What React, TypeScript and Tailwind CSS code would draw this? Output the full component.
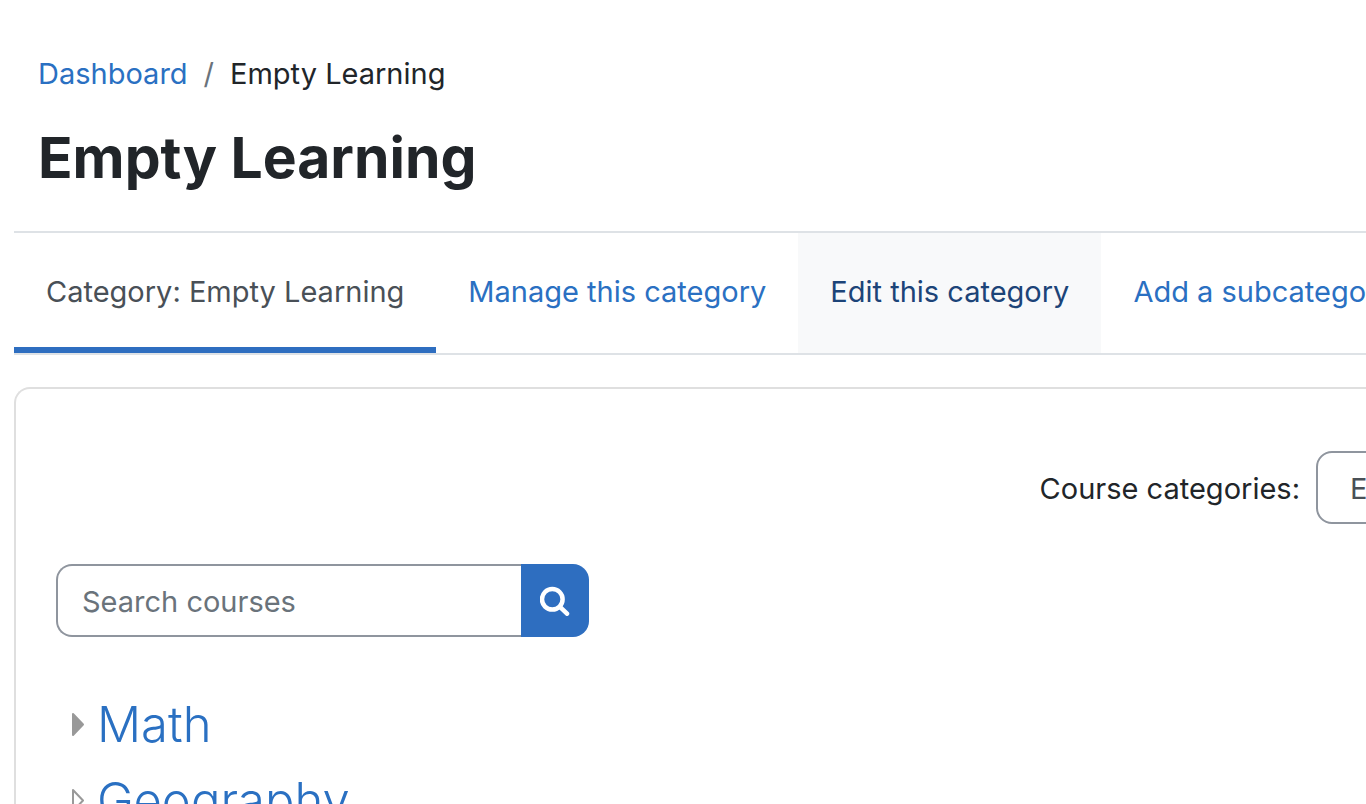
const tabs = [
  { label: "Category: Empty Learning", state: "active" },
  { label: "Manage this category", state: "normal" },
  { label: "Edit this category", state: "hover" },
  { label: "Add a subcategory", state: "normal" },
];

const tabStyles: Record<string, string> = {
  active: "border-[#2e6ec0] text-[#495057]",
  normal: "border-transparent text-[#2a70c2]",
  hover: "border-[#f8f9fa] bg-[#f8f9fa] text-[#1c4478]",
};

const categories = [
  { name: "Math", filled: true },
  { name: "Geography", filled: false },
];

function SearchIcon() {
  return (
    <svg width="30" height="30" viewBox="0 0 30 30" fill="none" stroke="currentColor" strokeWidth="4.5" strokeLinecap="round">
      <circle cx="12.3" cy="13.3" r="10.3" />
      <path d="M20.2 21.2l6.8 6.5" />
    </svg>
  );
}

export default function App() {
  return (
    <div className="h-screen overflow-hidden bg-white pl-[14px] font-['Inter',sans-serif] text-[29px] leading-[46px] text-[#212529]">
      {/* Header */}
      <header className="px-6 pt-[51px] pb-9">
        <nav aria-label="Breadcrumb" className="flex gap-4">
          <a href="#" className="text-[#2a70c2]">Dashboard</a>
          <span className="text-[#6a737b]">/</span>
          <span>Empty Learning</span>
        </nav>
        <h1 className="mt-6 text-[57px] leading-[74px] font-bold">Empty Learning</h1>
      </header>

      {/* Tabs */}
      <nav aria-label="Category" className="flex border-y-2 border-[#dee2e6] whitespace-nowrap">
        {tabs.map((tab) => (
          <a key={tab.label} href="#" className={`flex h-[120px] shrink-0 items-center border-b-6 px-8 pt-1 ${tabStyles[tab.state]}`}>
            {tab.label}
          </a>
        ))}
      </nav>

      <main className="mt-8 h-screen rounded-tl-2xl border-t-2 border-l-2 border-[#dfdfdf] px-10 pt-[62px]">
        <div className="-mr-[200px] flex items-center justify-end gap-4 whitespace-nowrap">
          <label htmlFor="category" className="pt-0.5">Course categories:</label>
          <select id="category" className="h-[73px] w-[210px] shrink-0 appearance-none rounded-2xl border-2 border-[#8f959e] px-8 pt-0.5 text-[#495057]">
            <option>Empty Learning</option>
          </select>
        </div>

        <form className="mt-10 flex h-[73px]">
          <input
            type="text"
            aria-label="Search courses"
            placeholder="Search courses"
            className="w-[465px] rounded-l-2xl border-2 border-r-0 border-[#8f959e] px-6 pt-0.5 placeholder:text-[#6a737b]"
          />
          <button type="button" aria-label="Search" className="flex w-[68px] items-center justify-center rounded-r-2xl bg-[#2e6ec0] text-white">
            <SearchIcon />
          </button>
        </form>

        <ul className="mt-[50px] px-4">
          {categories.map((category) => (
            <li key={category.name} className="flex h-[76px] items-center gap-3">
              <svg width="13" height="26" viewBox="0 0 13 26" fill={category.filled ? "#999999" : "none"} stroke="#999999" strokeWidth="2" strokeLinejoin="round">
                <path d="M1 2v21l10-10.5z" />
              </svg>
              <a href="#" className="text-[49px] leading-[76px] font-light text-[#2a70c2]">{category.name}</a>
            </li>
          ))}
        </ul>
      </main>
    </div>
  );
}
